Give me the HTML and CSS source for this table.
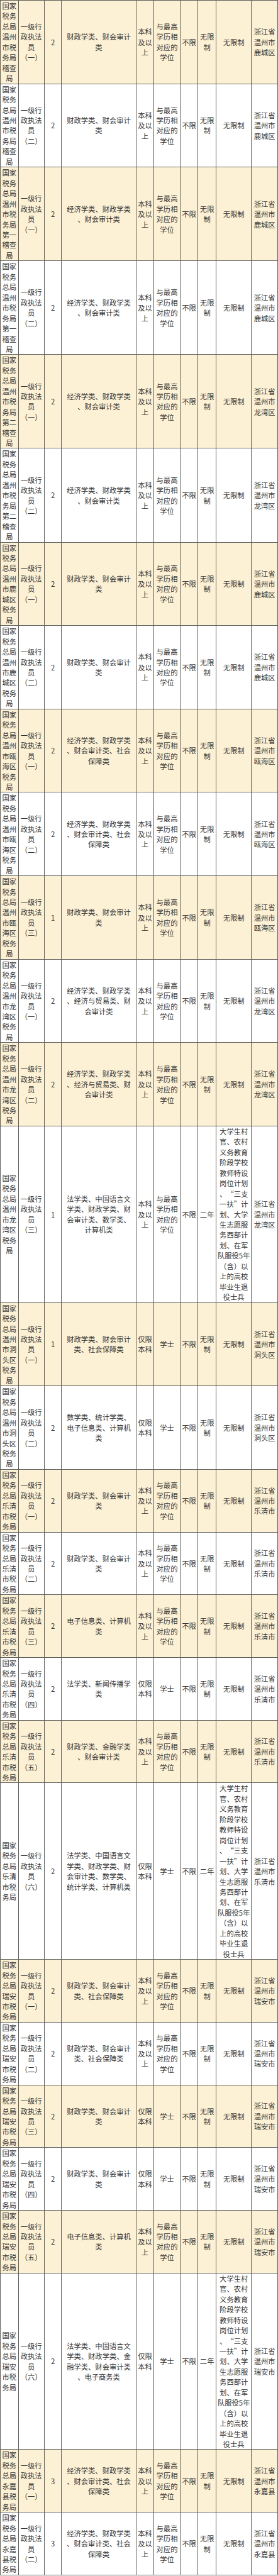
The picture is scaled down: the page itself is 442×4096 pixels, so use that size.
FILE: index.html
```html
<!DOCTYPE html>
<html lang="zh-CN">
<head>
<meta charset="utf-8">
<title>职位表</title>
<link rel="stylesheet" href="styles.css">
</head>
<body>
<table class="grid">
<colgroup>
<col class="c1"><col class="c2"><col class="c3"><col class="c4"><col class="c5"><col class="c6"><col class="c7"><col class="c8"><col class="c9"><col class="c10">
</colgroup>
<tbody>
<tr class="alt"><td>国家税务总局温州市税务局稽查局</td><td>一级行政执法员<span class="nw">（一）</span></td><td>2</td><td class="major">财政学类、财会审计类</td><td>本科及以上</td><td>与最高学历相对应的学位</td><td>不限</td><td>无限制</td><td class="cond">无限制</td><td>浙江省温州市鹿城区</td></tr>
<tr><td>国家税务总局温州市税务局稽查局</td><td>一级行政执法员<span class="nw">（二）</span></td><td>2</td><td class="major">财政学类、财会审计类</td><td>本科及以上</td><td>与最高学历相对应的学位</td><td>不限</td><td>无限制</td><td class="cond">无限制</td><td>浙江省温州市鹿城区</td></tr>
<tr class="alt"><td>国家税务总局温州市税务局第一稽查局</td><td>一级行政执法员<span class="nw">（一）</span></td><td>2</td><td class="major">经济学类、财政学类、财会审计类</td><td>本科及以上</td><td>与最高学历相对应的学位</td><td>不限</td><td>无限制</td><td class="cond">无限制</td><td>浙江省温州市鹿城区</td></tr>
<tr><td>国家税务总局温州市税务局第一稽查局</td><td>一级行政执法员<span class="nw">（二）</span></td><td>2</td><td class="major">经济学类、财政学类、财会审计类</td><td>本科及以上</td><td>与最高学历相对应的学位</td><td>不限</td><td>无限制</td><td class="cond">无限制</td><td>浙江省温州市鹿城区</td></tr>
<tr class="alt"><td>国家税务总局温州市税务局第二稽查局</td><td>一级行政执法员<span class="nw">（一）</span></td><td>2</td><td class="major">经济学类、财政学类、财会审计类</td><td>本科及以上</td><td>与最高学历相对应的学位</td><td>不限</td><td>无限制</td><td class="cond">无限制</td><td>浙江省温州市龙湾区</td></tr>
<tr><td>国家税务总局温州市税务局第二稽查局</td><td>一级行政执法员<span class="nw">（二）</span></td><td>2</td><td class="major">经济学类、财政学类、财会审计类</td><td>本科及以上</td><td>与最高学历相对应的学位</td><td>不限</td><td>无限制</td><td class="cond">无限制</td><td>浙江省温州市龙湾区</td></tr>
<tr class="alt"><td>国家税务总局温州市鹿城区税务局</td><td>一级行政执法员<span class="nw">（一）</span></td><td>2</td><td class="major">财政学类、财会审计类</td><td>本科及以上</td><td>与最高学历相对应的学位</td><td>不限</td><td>无限制</td><td class="cond">无限制</td><td>浙江省温州市鹿城区</td></tr>
<tr><td>国家税务总局温州市鹿城区税务局</td><td>一级行政执法员<span class="nw">（二）</span></td><td>2</td><td class="major">财政学类、财会审计类</td><td>本科及以上</td><td>与最高学历相对应的学位</td><td>不限</td><td>无限制</td><td class="cond">无限制</td><td>浙江省温州市鹿城区</td></tr>
<tr class="alt"><td>国家税务总局温州市瓯海区税务局</td><td>一级行政执法员<span class="nw">（一）</span></td><td>2</td><td class="major">经济学类、财政学类、财会审计类、社会保障类</td><td>本科及以上</td><td>与最高学历相对应的学位</td><td>不限</td><td>无限制</td><td class="cond">无限制</td><td>浙江省温州市瓯海区</td></tr>
<tr><td>国家税务总局温州市瓯海区税务局</td><td>一级行政执法员<span class="nw">（二）</span></td><td>2</td><td class="major">经济学类、财政学类、财会审计类、社会保障类</td><td>本科及以上</td><td>与最高学历相对应的学位</td><td>不限</td><td>无限制</td><td class="cond">无限制</td><td>浙江省温州市瓯海区</td></tr>
<tr class="alt"><td>国家税务总局温州市瓯海区税务局</td><td>一级行政执法员<span class="nw">（三）</span></td><td>1</td><td class="major">财政学类、财会审计类</td><td>本科及以上</td><td>与最高学历相对应的学位</td><td>不限</td><td>无限制</td><td class="cond">无限制</td><td>浙江省温州市瓯海区</td></tr>
<tr><td>国家税务总局温州市龙湾区税务局</td><td>一级行政执法员<span class="nw">（一）</span></td><td>2</td><td class="major">经济学类、财政学类、经济与贸易类、财会审计类</td><td>本科及以上</td><td>与最高学历相对应的学位</td><td>不限</td><td>无限制</td><td class="cond">无限制</td><td>浙江省温州市龙湾区</td></tr>
<tr class="alt"><td>国家税务总局温州市龙湾区税务局</td><td>一级行政执法员<span class="nw">（二）</span></td><td>2</td><td class="major">经济学类、财政学类、经济与贸易类、财会审计类</td><td>本科及以上</td><td>与最高学历相对应的学位</td><td>不限</td><td>无限制</td><td class="cond">无限制</td><td>浙江省温州市龙湾区</td></tr>
<tr><td>国家税务总局温州市龙湾区税务局</td><td>一级行政执法员<span class="nw">（三）</span></td><td>1</td><td class="major">法学类、中国语言文学类、财政学类、财会审计类、数学类、计算机类</td><td>本科及以上</td><td>与最高学历相对应的学位</td><td>不限</td><td>二年</td><td class="cond">大学生村官、农村义务教育阶段学校教师特设岗位计划、“三支一扶”计划、大学生志愿服务西部计划、在军队服役5年（含）以上的高校毕业生退役士兵</td><td>浙江省温州市龙湾区</td></tr>
<tr class="alt"><td>国家税务总局温州市洞头区税务局</td><td>一级行政执法员<span class="nw">（一）</span></td><td>1</td><td class="major">财政学类、财会审计类、社会保障类</td><td>仅限本科</td><td>学士</td><td>不限</td><td>无限制</td><td class="cond">无限制</td><td>浙江省温州市洞头区</td></tr>
<tr><td>国家税务总局温州市洞头区税务局</td><td>一级行政执法员<span class="nw">（二）</span></td><td>2</td><td class="major">数学类、统计学类、电子信息类、计算机类</td><td>仅限本科</td><td>学士</td><td>不限</td><td>无限制</td><td class="cond">无限制</td><td>浙江省温州市洞头区</td></tr>
<tr class="alt"><td>国家税务总局乐清市税务局</td><td>一级行政执法员<span class="nw">（一）</span></td><td>2</td><td class="major">财政学类、财会审计类</td><td>本科及以上</td><td>与最高学历相对应的学位</td><td>不限</td><td>无限制</td><td class="cond">无限制</td><td>浙江省温州市乐清市</td></tr>
<tr><td>国家税务总局乐清市税务局</td><td>一级行政执法员<span class="nw">（二）</span></td><td>2</td><td class="major">财政学类、财会审计类</td><td>本科及以上</td><td>与最高学历相对应的学位</td><td>不限</td><td>无限制</td><td class="cond">无限制</td><td>浙江省温州市乐清市</td></tr>
<tr class="alt"><td>国家税务总局乐清市税务局</td><td>一级行政执法员<span class="nw">（三）</span></td><td>2</td><td class="major">电子信息类、计算机类</td><td>本科及以上</td><td>与最高学历相对应的学位</td><td>不限</td><td>无限制</td><td class="cond">无限制</td><td>浙江省温州市乐清市</td></tr>
<tr><td>国家税务总局乐清市税务局</td><td>一级行政执法员<span class="nw">（四）</span></td><td>2</td><td class="major">法学类、新闻传播学类</td><td>仅限本科</td><td>学士</td><td>不限</td><td>无限制</td><td class="cond">无限制</td><td>浙江省温州市乐清市</td></tr>
<tr class="alt"><td>国家税务总局乐清市税务局</td><td>一级行政执法员<span class="nw">（五）</span></td><td>2</td><td class="major">财政学类、金融学类、财会审计类</td><td>本科及以上</td><td>与最高学历相对应的学位</td><td>不限</td><td>无限制</td><td class="cond">无限制</td><td>浙江省温州市乐清市</td></tr>
<tr><td>国家税务总局乐清市税务局</td><td>一级行政执法员<span class="nw">（六）</span></td><td>2</td><td class="major">法学类、中国语言文学类、财政学类、财会审计类、数学类、统计学类、计算机类</td><td>仅限本科</td><td>学士</td><td>不限</td><td>二年</td><td class="cond">大学生村官、农村义务教育阶段学校教师特设岗位计划、“三支一扶”计划、大学生志愿服务西部计划、在军队服役5年（含）以上的高校毕业生退役士兵</td><td>浙江省温州市乐清市</td></tr>
<tr class="alt"><td>国家税务总局瑞安市税务局</td><td>一级行政执法员<span class="nw">（一）</span></td><td>2</td><td class="major">财政学类、财会审计类、社会保障类</td><td>本科及以上</td><td>与最高学历相对应的学位</td><td>不限</td><td>无限制</td><td class="cond">无限制</td><td>浙江省温州市瑞安市</td></tr>
<tr><td>国家税务总局瑞安市税务局</td><td>一级行政执法员<span class="nw">（二）</span></td><td>2</td><td class="major">财政学类、财会审计类、社会保障类</td><td>本科及以上</td><td>与最高学历相对应的学位</td><td>不限</td><td>无限制</td><td class="cond">无限制</td><td>浙江省温州市瑞安市</td></tr>
<tr class="alt"><td>国家税务总局瑞安市税务局</td><td>一级行政执法员<span class="nw">（三）</span></td><td>2</td><td class="major">财政学类、财会审计类</td><td>仅限本科</td><td>学士</td><td>不限</td><td>无限制</td><td class="cond">无限制</td><td>浙江省温州市瑞安市</td></tr>
<tr><td>国家税务总局瑞安市税务局</td><td>一级行政执法员<span class="nw">（四）</span></td><td>2</td><td class="major">财政学类、财会审计类</td><td>仅限本科</td><td>学士</td><td>不限</td><td>无限制</td><td class="cond">无限制</td><td>浙江省温州市瑞安市</td></tr>
<tr class="alt"><td>国家税务总局瑞安市税务局</td><td>一级行政执法员<span class="nw">（五）</span></td><td>2</td><td class="major">电子信息类、计算机类</td><td>本科及以上</td><td>与最高学历相对应的学位</td><td>不限</td><td>无限制</td><td class="cond">无限制</td><td>浙江省温州市瑞安市</td></tr>
<tr><td>国家税务总局瑞安市税务局</td><td>一级行政执法员<span class="nw">（六）</span></td><td>2</td><td class="major">法学类、中国语言文学类、财政学类、金融学类、财会审计类、电子商务类</td><td>仅限本科</td><td>学士</td><td>不限</td><td>二年</td><td class="cond">大学生村官、农村义务教育阶段学校教师特设岗位计划、“三支一扶”计划、大学生志愿服务西部计划、在军队服役5年（含）以上的高校毕业生退役士兵</td><td>浙江省温州市瑞安市</td></tr>
<tr class="alt"><td>国家税务总局永嘉县税务局</td><td>一级行政执法员<span class="nw">（一）</span></td><td>3</td><td class="major">经济学类、财政学类、财会审计类、社会保障类</td><td>本科及以上</td><td>与最高学历相对应的学位</td><td>不限</td><td>无限制</td><td class="cond">无限制</td><td>浙江省温州市永嘉县</td></tr>
<tr><td>国家税务总局永嘉县税务局</td><td>一级行政执法员<span class="nw">（二）</span></td><td>3</td><td class="major">经济学类、财政学类、财会审计类、社会保障类</td><td>本科及以上</td><td>与最高学历相对应的学位</td><td>不限</td><td>无限制</td><td class="cond">无限制</td><td>浙江省温州市永嘉县</td></tr>
</tbody>
</table>
</body>
</html>
```

FILE: styles.css
```css
html, body {
  margin: 0;
  padding: 0;
  background: #ffffff;
}

.grid {
  width: 442px;
  table-layout: fixed;
  border-collapse: collapse;
  font-family: "Noto Sans CJK SC", "Noto Sans", sans-serif;
  font-size: 11.3px;
  line-height: 16.45px;
  color: #333333;
  text-spacing-trim: space-all;
}

.c1 { width: 28.6px; }
.c2 { width: 41.2px; }
.c3 { width: 27.6px; }
.c4 { width: 118.3px; }
.c5 { width: 28.6px; }
.c6 { width: 41.5px; }
.c7 { width: 28.6px; }
.c8 { width: 28.6px; }
.c9 { width: 56.5px; }
.c10 { width: 41.5px; }

.grid td {
  border: 1px solid #5f5f5a;
  padding: 0 2px;
  text-align: center;
  vertical-align: middle;
  line-break: anywhere;
  overflow-wrap: anywhere;
}

.grid td.major {
  padding: 0 3px;
}

.grid td.cond {
  padding: 0 1px;
}

.grid tr.alt td {
  background: #fdf1d5;
}

.nw {
  white-space: nowrap;
}
```
